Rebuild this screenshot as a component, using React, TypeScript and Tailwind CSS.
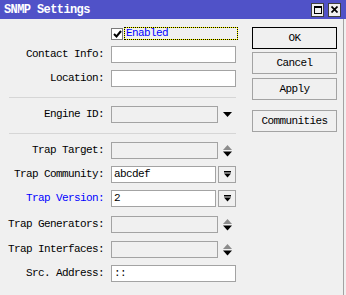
import React from 'react';

const mono = "font-['Liberation_Mono',monospace] text-[11px] tracking-[-0.6px]";

function DownArrow() {
  return (
    <svg width="9" height="5" viewBox="0 0 9 5" className="ml-[5px]">
      <polygon points="0,0 9,0 4.5,5" fill="#000" />
    </svg>
  );
}

function Spinner() {
  return (
    <svg width="9" height="12" viewBox="0 0 9 12" className="ml-[5px]">
      <polygon points="0,5 9,5 4.5,0" fill="#8c8c8c" />
      <polygon points="0,6.5 9,6.5 4.5,11.5" fill="#000" />
    </svg>
  );
}

function DropButton() {
  return (
    <div className="ml-[2px] w-[18px] h-[17px] border border-[#a3a3a3] bg-[#f0f0f0] flex items-center justify-center">
      <svg width="7" height="7" viewBox="0 0 7 7">
        <rect x="0" y="0" width="7" height="1.5" fill="#000" />
        <polygon points="0,2.5 7,2.5 3.5,6.5" fill="#000" />
      </svg>
    </div>
  );
}

function Field({ value, disabled, width }: { value?: string; disabled?: boolean; width: string }) {
  return (
    <div
      className={`${width} h-[17px] border border-[#a3a3a3] flex items-center px-[2px] ${
        disabled ? 'bg-[#f0f0f0]' : 'bg-white'
      }`}
    >
      <span className="text-black leading-none">{value}</span>
    </div>
  );
}

function Row({
  label,
  blue,
  className,
  children,
}: {
  label: string;
  blue?: boolean;
  className: string;
  children: React.ReactNode;
}) {
  return (
    <div className={`flex items-center h-[17px] ${className}`}>
      <div className={`w-[104px] text-right whitespace-nowrap ${blue ? 'text-[#0000ff]' : 'text-black'}`}>
        {label}
      </div>
      <div className="ml-[7px] flex items-center">{children}</div>
    </div>
  );
}

function WinButton({ label, primary, className }: { label: string; primary?: boolean; className: string }) {
  return (
    <div
      className={`w-[85px] h-[22px] flex items-center justify-center bg-[#f0f0f0] border ${
        primary ? 'border-black' : 'border-[#a3a3a3]'
      } ${className}`}
    >
      {label}
    </div>
  );
}

export default function App() {
  return (
    <div className={`w-[346px] h-[295px] bg-[#f0f0f0] flex flex-col overflow-hidden ${mono}`}>
      {/* Title bar */}
      <div className="h-[19px] bg-[#5052c8] flex items-center justify-between pl-[4px] pr-[5px]">
        <span className="text-white font-bold text-[12px]">SNMP Settings</span>
        <div className="flex gap-[4px]">
          <div className="w-[13px] h-[14px] bg-[#f0f0f0] border border-[#404040] flex items-center justify-center">
            <div className="w-[8px] h-[8px] border border-black border-t-2" />
          </div>
          <div className="w-[13px] h-[14px] bg-[#f0f0f0] border border-[#404040] flex items-center justify-center">
            <svg width="7" height="7" viewBox="0 0 7 7">
              <path d="M0.5 0.5 L6.5 6.5 M6.5 0.5 L0.5 6.5" stroke="#000" strokeWidth="1.7" />
            </svg>
          </div>
        </div>
      </div>

      <div className="flex flex-1 border-r border-[#a3a3a3] mr-[2px]">
        {/* Form column */}
        <div className="w-[238px] flex flex-col">
          <div className="flex items-center h-[13px] mt-[8px] ml-[111px]">
            <div className="w-[12px] h-[12px] border border-[#7a7a7a] bg-white flex items-center justify-center">
              <svg width="9" height="8" viewBox="0 0 9 8">
                <path d="M1 4 L3.5 6.5 L8 1" stroke="#000" strokeWidth="2" fill="none" />
              </svg>
            </div>
            <div className="ml-[1px] w-[114px] h-[13px] bg-[#ffff00]">
              <div className="w-full h-full border border-dotted border-black bg-[#f0f0f0] bg-clip-padding flex items-center pl-[1px] text-[#0000ff]">
                Enabled
              </div>
            </div>
          </div>

          <Row label="Contact Info:" className="mt-[6px]">
            <Field width="w-[125px]" />
          </Row>
          <Row label="Location:" className="mt-[7px]">
            <Field width="w-[125px]" />
          </Row>

          <div className="ml-[9px] w-[227px] border-t border-[#d6d6d6] mt-[10px]" />

          <Row label="Engine ID:" className="mt-[8px]">
            <Field width="w-[107px]" disabled />
            <DownArrow />
          </Row>

          <div className="ml-[9px] w-[227px] border-t border-[#d6d6d6] mt-[10px]" />

          <Row label="Trap Target:" className="mt-[8px]">
            <Field width="w-[107px]" disabled />
            <Spinner />
          </Row>
          <Row label="Trap Community:" className="mt-[7px]">
            <Field width="w-[105px]" value="abcdef" />
            <DropButton />
          </Row>
          <Row label="Trap Version:" blue className="mt-[7px]">
            <Field width="w-[105px]" value="2" />
            <DropButton />
          </Row>
          <Row label="Trap Generators:" className="mt-[9px]">
            <Field width="w-[107px]" disabled />
            <Spinner />
          </Row>
          <Row label="Trap Interfaces:" className="mt-[8px]">
            <Field width="w-[107px]" disabled />
            <Spinner />
          </Row>
          <Row label="Src. Address:" className="mt-[7px]">
            <Field width="w-[125px]" value="::" />
          </Row>
        </div>

        {/* Buttons column */}
        <div className="ml-[14px] flex flex-col pt-[8px]">
          <WinButton label="OK" primary className="mt-0" />
          <WinButton label="Cancel" className="mt-[3px]" />
          <WinButton label="Apply" className="mt-[4px]" />
          <WinButton label="Communities" className="mt-[10px]" />
        </div>
      </div>
    </div>
  );
}
